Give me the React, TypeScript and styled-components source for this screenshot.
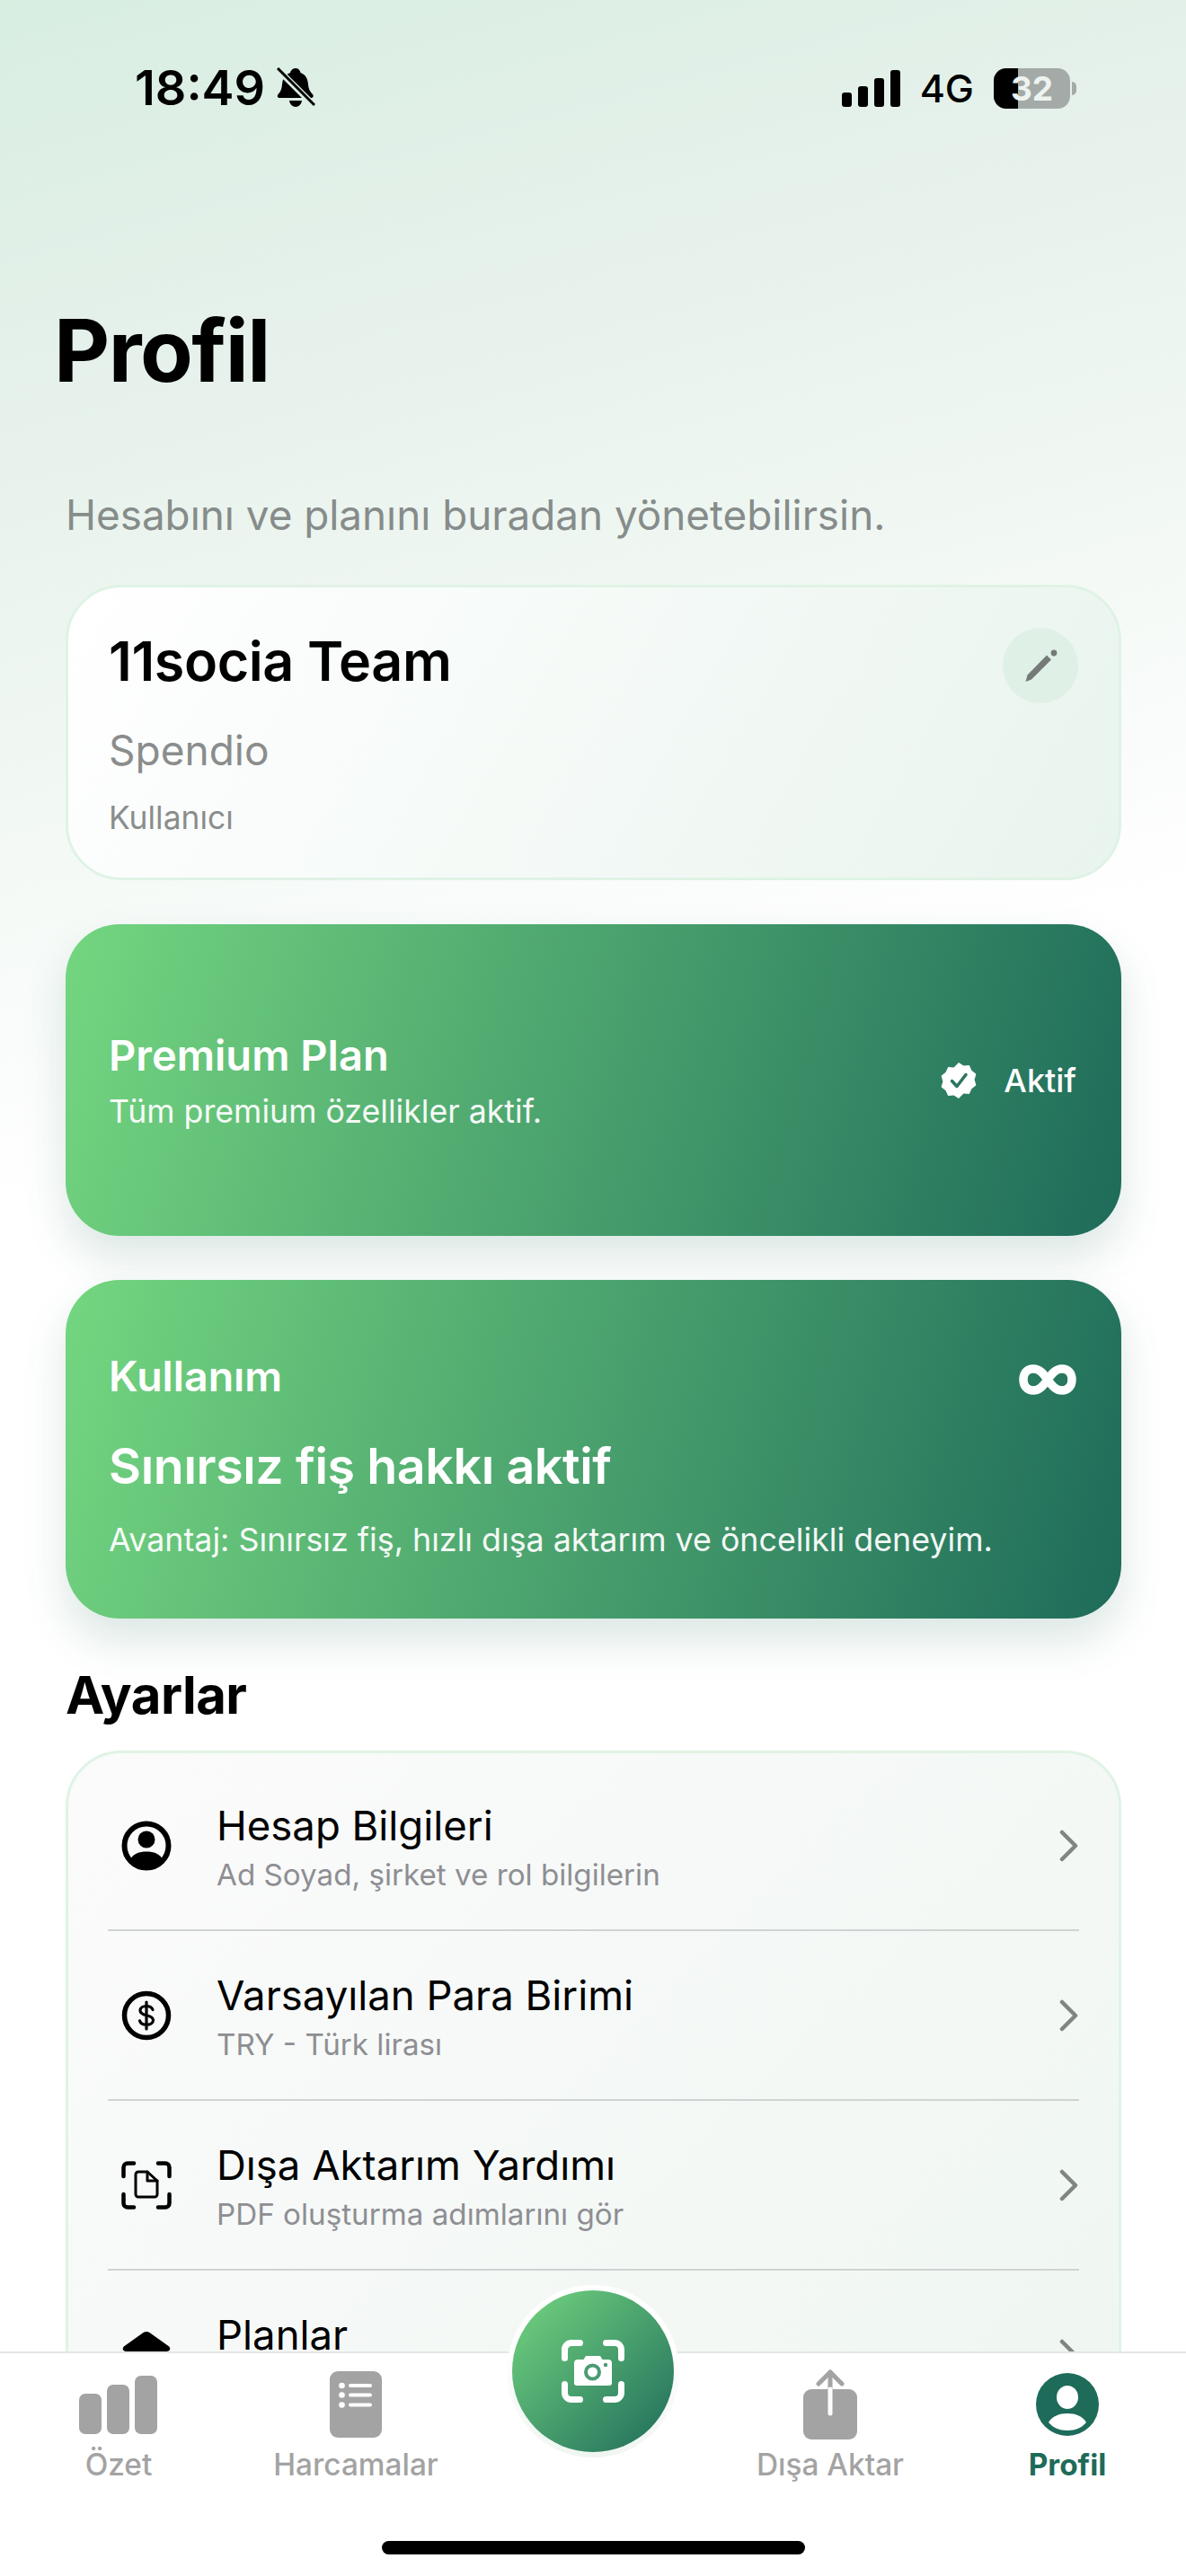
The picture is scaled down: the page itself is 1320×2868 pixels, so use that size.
import styled, { createGlobalStyle } from "styled-components";

const GlobalStyle = createGlobalStyle`
  html, body {
    margin: 0;
    padding: 0;
    background: #fff;
  }
  * {
    box-sizing: border-box;
  }
`;

const Page = styled.div`
  position: relative;
  width: 1320px;
  height: 2868px;
  overflow: hidden;
  font-family: Inter, "Liberation Sans", sans-serif;
  color: #000;
  background: linear-gradient(165deg, #d8eee1 0%, #e6f1eb 14%, #eef6f1 24%, #ffffff 42%);
`;

const StatusBar = styled.div`
  height: 130px;
  padding: 68px 122px 0 150px;
  display: flex;
  align-items: flex-start;
  justify-content: space-between;
`;
const StatusLeft = styled.div`
  display: flex;
  align-items: center;
  gap: 12px;
`;
const Clock = styled.span`
  font-size: 54px;
  line-height: 60px;
  font-weight: 600;
`;
const StatusRight = styled.div`
  display: flex;
  align-items: center;
  gap: 22px;
  height: 60px;
`;
const Signal = styled.div`
  display: flex;
  align-items: flex-end;
  gap: 7px;
  height: 41px;
`;
const SignalBar = styled.i<{ $h: number }>`
  width: 11px;
  height: ${(p) => p.$h}px;
  border-radius: 3px;
  background: #000;
`;
const Network = styled.span`
  font-size: 43px;
  line-height: 60px;
  font-weight: 500;
`;
const BatteryWrap = styled.div`
  display: flex;
  align-items: center;
  gap: 2px;
`;
const Battery = styled.div`
  position: relative;
  width: 85px;
  height: 45px;
  border-radius: 14px;
  overflow: hidden;
  background: #a3aaa7;
  display: flex;
  align-items: center;
  justify-content: center;
  color: #eef3f0;
  font-size: 37px;
  font-weight: 700;
`;
const BatteryFill = styled.i`
  position: absolute;
  left: 0;
  top: 0;
  bottom: 0;
  width: 27px;
  background: #000;
`;
const BatteryLabel = styled.span`
  position: relative;
`;
const BatteryNub = styled.i`
  width: 5px;
  height: 15px;
  border-radius: 0 5px 5px 0;
  background: #a3aaa7;
`;

const Title = styled.h1`
  margin: 209px 0 0 60px;
  font-size: 96px;
  line-height: 102px;
  font-weight: 700;
  letter-spacing: -1.5px;
`;
const Subtitle = styled.p`
  margin: 105px 73px 0;
  font-size: 45.8px;
  line-height: 56px;
  font-weight: 400;
  color: #868c8a;
`;

const Content = styled.div`
  margin: 49px 72px 0 73px;
  display: flex;
  flex-direction: column;
`;

const ProfileCard = styled.section`
  position: relative;
  height: 329px;
  padding: 46px 45px 0;
  border: 3px solid #dff3e5;
  border-radius: 62px;
  background: linear-gradient(120deg, #ffffff 0%, #e9f4ee 100%);
`;
const ProfileName = styled.div`
  font-size: 61px;
  line-height: 72px;
  font-weight: 600;
  letter-spacing: -0.4px;
`;
const ProfileCompany = styled.div`
  margin-top: 35px;
  font-size: 46px;
  line-height: 56px;
  color: #8a8d8c;
`;
const ProfileRole = styled.div`
  margin-top: 27px;
  font-size: 35.4px;
  line-height: 42px;
  color: #8a8d8c;
`;
const EditButton = styled.div`
  position: absolute;
  top: 45px;
  right: 45px;
  width: 84px;
  height: 84px;
  border-radius: 50%;
  background: #dff1e6;
  display: flex;
  align-items: center;
  justify-content: center;
`;

const GradientCard = styled.section<{ $h: number; $mt: number }>`
  height: ${(p) => p.$h}px;
  margin-top: ${(p) => p.$mt}px;
  padding: 0 50px 0 48px;
  border-radius: 60px;
  background: linear-gradient(105deg, #74d680 0%, #1e6b5a 100%);
  box-shadow: 0 24px 48px rgba(30, 107, 90, 0.16);
  color: #fff;
`;
const PlanRow = styled.div`
  height: 100%;
  display: flex;
  align-items: center;
  justify-content: space-between;
`;
const PlanName = styled.div`
  font-size: 47px;
  line-height: 56px;
  font-weight: 600;
`;
const PlanNote = styled.div`
  margin-top: 12px;
  font-size: 35.7px;
  line-height: 44px;
  opacity: 0.94;
`;
const PlanStatus = styled.div`
  display: flex;
  align-items: center;
  gap: 30px;
  font-size: 36px;
  font-weight: 500;
`;
const UsageHead = styled.div`
  padding-top: 74px;
  display: flex;
  align-items: center;
  justify-content: space-between;
`;
const UsageLabel = styled.div`
  font-size: 46.5px;
  line-height: 66px;
  font-weight: 600;
`;
const UsageTitle = styled.div`
  margin-top: 33px;
  font-size: 55.5px;
  line-height: 68px;
  font-weight: 600;
  letter-spacing: -0.4px;
`;
const UsageNote = styled.div`
  margin-top: 26px;
  font-size: 35.8px;
  line-height: 44px;
  opacity: 0.94;
`;
const InfinityMark = styled.svg`
  margin-top: 8px;
`;

const SectionTitle = styled.h2`
  margin: 50px 0 0;
  font-size: 58px;
  line-height: 70px;
  font-weight: 700;
  letter-spacing: -0.5px;
`;

const SettingsCard = styled.section`
  margin-top: 27px;
  height: 900px;
  padding: 9px 44px 0;
  border: 3px solid #dff3e5;
  border-radius: 62px;
  background: linear-gradient(135deg, #fbfbfb 0%, #eef6f1 100%);
`;
const Row = styled.div`
  height: 189px;
  display: flex;
  align-items: center;
  border-bottom: 2px solid #cfd3d2;
`;
const RowIcon = styled.div`
  width: 121px;
  padding-left: 15px;
  display: flex;
  align-items: center;
`;
const RowBody = styled.div`
  flex: 1;
  padding-top: 4px;
`;
const RowTitle = styled.div`
  font-size: 45.5px;
  line-height: 58px;
  font-weight: 400;
`;
const RowSub = styled.div`
  margin-top: 2px;
  font-size: 33.2px;
  line-height: 46px;
  color: #8e8e93;
`;

const TabBar = styled.nav`
  position: absolute;
  left: 0;
  right: 0;
  bottom: 0;
  height: 250px;
  padding-top: 17px;
  background: #fff;
  border-top: 2px solid #e4e6e6;
  display: grid;
  grid-template-columns: repeat(5, 264px);
  align-items: start;
`;
const Tab = styled.div<{ $active?: boolean }>`
  display: flex;
  flex-direction: column;
  align-items: center;
  color: ${(p) => (p.$active ? "#1e6b5a" : "#a3a3a3")};
  font-weight: ${(p) => (p.$active ? 700 : 500)};
`;
const TabIcon = styled.div`
  height: 80px;
  display: flex;
  align-items: center;
  justify-content: center;
`;
const TabLabel = styled.div`
  margin-top: 5px;
  font-size: 33.4px;
  line-height: 44px;
`;
const CaptureSlot = styled.div`
  position: relative;
`;
const CaptureRing = styled.div`
  position: absolute;
  left: 36px;
  top: -93px;
  width: 192px;
  height: 192px;
  padding: 6px;
  border-radius: 50%;
  background: linear-gradient(180deg, #ffffff 0%, #ffffff 35%, #eff6f2 100%);
`;
const CaptureButton = styled.div`
  width: 180px;
  height: 180px;
  border-radius: 50%;
  background: linear-gradient(135deg, #74d680 0%, #1e6b5a 100%);
  display: flex;
  align-items: center;
  justify-content: center;
`;
const HomeIndicator = styled.div`
  position: absolute;
  left: 425px;
  bottom: 24px;
  width: 471px;
  height: 15px;
  border-radius: 8px;
  background: #000;
`;

const BellOff = () => (
  <svg width="44" height="46" viewBox="0 0 44 46">
    <path d="M22 1c3 0 5 2 5.500 5 6 2 8 7 8.500 13 .4 5 2 8 5 11 1.500 2 .5 4-2 4H4.500c-2.500 0-3.500-2-2-4 3-3 4-6 4.500-11 .5-6 3-11 9-13C16.500 3 19 1 22 1z" fill="#000" />
    <path d="M15 37h14c-.5 4-3.500 7-7 7s-6.500-3-7-7z" fill="#000" />
    <path d="M2 2l40 40" stroke="#dbeee3" strokeWidth="7" />
    <path d="M2 1l41 41" stroke="#000" strokeWidth="3" />
  </svg>
);

const Pencil = () => (
  <svg width="48" height="52" viewBox="0 0 48 52" fill="#757a78">
    <path d="M7.500 44l2-7.500L31 14.500l5 5L14 41.500z" />
    <circle cx="39" cy="12" r="3.400" />
  </svg>
);

const VerifiedBadge = () => (
  <svg width="40" height="40" viewBox="0 0 40 40">
    <path
      d="M20 0l5.400 3.600 6.400-.6 2.600 5.800 5 4-1.800 6.200 1.800 6.200-5 4-2.600 5.800-6.400-.6L20 40l-5.400-3.600-6.400.6-2.600-5.800-5-4L2.400 21 .6 14.800l5-4L8.200 5l6.400.6L20 0z"
      fill="#fff"
    />
    <path d="M12.500 20.500l5.500 6 10-13" fill="none" stroke="#2a7561" strokeWidth="3.500" strokeLinecap="round" strokeLinejoin="round" />
  </svg>
);

const Infinity8 = () => (
  <InfinityMark width="64" height="34" viewBox="0 0 64 34" fill="none" stroke="#fff" strokeWidth="9.500">
    <path d="M32 17c-5-7-9-12-16-12C9 5 5 10 5 17s4 12 11 12c7 0 11-5 16-12zm0 0c5-7 9-12 16-12 7 0 11 5 11 12s-4 12-11 12c-7 0-11-5-16-12z" />
  </InfinityMark>
);

const PersonRing = () => (
  <svg width="56" height="56" viewBox="0 0 56 56">
    <circle cx="28" cy="28" r="24.500" fill="none" stroke="#000" strokeWidth="6" />
    <circle cx="28" cy="21" r="9.500" fill="#000" />
    <path d="M10 43c3-6 10-8.500 18-8.500S43 37 46 43c-4 6-11 10-18 10s-14-4-18-10z" fill="#000" />
  </svg>
);

const DollarRing = () => (
  <svg width="56" height="56" viewBox="0 0 56 56">
    <circle cx="28" cy="28" r="24.500" fill="none" stroke="#000" strokeWidth="5.500" />
    <path d="M35 21.500c-1-2.500-3.500-4-7-4-4 0-7 2-7 5 0 3 3 4.300 7 5.300s7.500 2.300 7.500 5.500c0 3-3.200 5-7.500 5-3.800 0-6.600-1.500-7.500-4.500M28 13v30" fill="none" stroke="#000" strokeWidth="3.200" strokeLinecap="round" />
  </svg>
);

const ScanDoc = () => (
  <svg width="56" height="54" viewBox="0 0 56 54" fill="none" stroke="#000" strokeLinecap="round" strokeLinejoin="round">
    <path d="M2.500 17V7a4.500 4.500 0 0 1 4.500-4.500h7M41 2.500h8A4.500 4.500 0 0 1 53.500 7v10M2.500 37v10A4.500 4.500 0 0 0 7 51.500h7M41 51.500h8a4.500 4.500 0 0 0 4.500-4.500V37" strokeWidth="4.500" />
    <path d="M16 15a3 3 0 0 1 3-3h10l11 10v15a3 3 0 0 1-3 3H19a3 3 0 0 1-3-3V15z" strokeWidth="3" />
    <path d="M29 12v10h11" strokeWidth="3" />
  </svg>
);

const PlansIcon = () => (
  <svg width="56" height="54" viewBox="0 0 56 54">
    <path d="M24.500 2c2-1.400 5-1.400 7 0l21 15c3 2 2 6-2 6H5.500c-4 0-5-4-2-6l21-15z" fill="#000" />
  </svg>
);

const Chevron = () => (
  <svg width="22" height="36" viewBox="0 0 22 36" fill="none" stroke="#808584" strokeWidth="4.500" strokeLinecap="round" strokeLinejoin="round">
    <path d="M3 3l15 15L3 33" />
  </svg>
);

const BarsIcon = () => (
  <svg width="88" height="66" viewBox="0 0 88 66" fill="#a3a3a3">
    <rect x="0" y="21" width="25" height="45" rx="7" />
    <rect x="31" y="11" width="25" height="55" rx="7" />
    <rect x="62" y="1" width="25" height="65" rx="7" />
  </svg>
);

const ListIcon = () => (
  <svg width="58" height="74" viewBox="0 0 58 74">
    <rect width="58" height="74" rx="9" fill="#a3a3a3" />
    <g fill="#fff">
      <circle cx="13.500" cy="16" r="3.300" />
      <circle cx="13.500" cy="26.500" r="3.300" />
      <circle cx="13.500" cy="37.500" r="3.300" />
      <rect x="21" y="14" width="26" height="4" rx="2" />
      <rect x="21" y="24.500" width="26" height="4" rx="2" />
      <rect x="21" y="35.500" width="26" height="4" rx="2" />
    </g>
  </svg>
);

const ShareIcon = () => (
  <svg width="60" height="78" viewBox="0 0 60 78">
    <rect y="22" width="60" height="56" rx="9" fill="#a3a3a3" />
    <path d="M30 3v24" stroke="#a3a3a3" strokeWidth="5" strokeLinecap="round" />
    <path d="M30 22v27" stroke="#fff" strokeWidth="5" strokeLinecap="round" />
    <path d="M17 16L30 3l13 13" fill="none" stroke="#a3a3a3" strokeWidth="5" strokeLinecap="round" strokeLinejoin="round" />
  </svg>
);

const ProfileIcon = () => (
  <svg width="70" height="70" viewBox="0 0 70 70">
    <circle cx="35" cy="35" r="35" fill="#1e6b5a" />
    <ellipse cx="35" cy="27" rx="12" ry="13" fill="#fff" />
    <path d="M14 55c4-7 12-10 21-10s17 3 21 10c-5 6-12 9-21 9s-16-3-21-9z" fill="#fff" />
  </svg>
);

const CameraScan = () => (
  <svg width="70" height="70" viewBox="0 0 70 70" fill="none">
    <path d="M3.500 20.500V11a7.500 7.500 0 0 1 7.500-7.500h9.500M49.500 3.500H59a7.500 7.500 0 0 1 7.500 7.500v9.500M3.500 49.500V59a7.500 7.500 0 0 0 7.500 7.500h9.500M49.500 66.500H59a7.500 7.500 0 0 0 7.500-7.500v-9.500" stroke="#fff" strokeWidth="7" strokeLinecap="round" />
    <path d="M14 26a4 4 0 0 1 4-4h6.500l2.500-4h16l2.500 4H52a4 4 0 0 1 4 4v22a3 3 0 0 1-3 3H17a3 3 0 0 1-3-3V26z" fill="#fff" />
    <circle cx="34.500" cy="36" r="7.500" fill="none" stroke="#4a9c74" strokeWidth="4" />
    <circle cx="49" cy="28" r="2.200" fill="#4a9c74" />
  </svg>
);

const settings = [
  { title: "Hesap Bilgileri", sub: "Ad Soyad, şirket ve rol bilgilerin", icon: <PersonRing /> },
  { title: "Varsayılan Para Birimi", sub: "TRY - Türk lirası", icon: <DollarRing /> },
  { title: "Dışa Aktarım Yardımı", sub: "PDF oluşturma adımlarını gör", icon: <ScanDoc /> },
  { title: "Planlar", sub: "", icon: <PlansIcon /> },
];

export default function App() {
  return (
    <Page>
      <GlobalStyle />
      <StatusBar>
        <StatusLeft>
          <Clock>18:49</Clock>
          <BellOff />
        </StatusLeft>
        <StatusRight>
          <Signal>
            <SignalBar $h={16} />
            <SignalBar $h={23} />
            <SignalBar $h={32} />
            <SignalBar $h={41} />
          </Signal>
          <Network>4G</Network>
          <BatteryWrap>
            <Battery>
              <BatteryFill />
              <BatteryLabel>32</BatteryLabel>
            </Battery>
            <BatteryNub />
          </BatteryWrap>
        </StatusRight>
      </StatusBar>

      <Title>Profil</Title>
      <Subtitle>Hesabını ve planını buradan yönetebilirsin.</Subtitle>

      <Content>
        <ProfileCard>
          <ProfileName>11socia Team</ProfileName>
          <ProfileCompany>Spendio</ProfileCompany>
          <ProfileRole>Kullanıcı</ProfileRole>
          <EditButton>
            <Pencil />
          </EditButton>
        </ProfileCard>

        <GradientCard $h={347} $mt={49}>
          <PlanRow>
            <div>
              <PlanName>Premium Plan</PlanName>
              <PlanNote>Tüm premium özellikler aktif.</PlanNote>
            </div>
            <PlanStatus>
              <VerifiedBadge />
              Aktif
            </PlanStatus>
          </PlanRow>
        </GradientCard>

        <GradientCard $h={377} $mt={49}>
          <UsageHead>
            <UsageLabel>Kullanım</UsageLabel>
            <Infinity8 />
          </UsageHead>
          <UsageTitle>Sınırsız fiş hakkı aktif</UsageTitle>
          <UsageNote>Avantaj: Sınırsız fiş, hızlı dışa aktarım ve öncelikli deneyim.</UsageNote>
        </GradientCard>

        <SectionTitle>Ayarlar</SectionTitle>

        <SettingsCard>
          {settings.map((item) => (
            <Row key={item.title}>
              <RowIcon>{item.icon}</RowIcon>
              <RowBody>
                <RowTitle>{item.title}</RowTitle>
                <RowSub>{item.sub || "\u00a0"}</RowSub>
              </RowBody>
              <Chevron />
            </Row>
          ))}
        </SettingsCard>
      </Content>

      <TabBar>
        <Tab>
          <TabIcon>
            <BarsIcon />
          </TabIcon>
          <TabLabel>Özet</TabLabel>
        </Tab>
        <Tab>
          <TabIcon>
            <ListIcon />
          </TabIcon>
          <TabLabel>Harcamalar</TabLabel>
        </Tab>
        <CaptureSlot>
          <CaptureRing>
            <CaptureButton>
              <CameraScan />
            </CaptureButton>
          </CaptureRing>
        </CaptureSlot>
        <Tab>
          <TabIcon>
            <ShareIcon />
          </TabIcon>
          <TabLabel>Dışa Aktar</TabLabel>
        </Tab>
        <Tab $active>
          <TabIcon>
            <ProfileIcon />
          </TabIcon>
          <TabLabel>Profil</TabLabel>
        </Tab>
      </TabBar>
      <HomeIndicator />
    </Page>
  );
}
